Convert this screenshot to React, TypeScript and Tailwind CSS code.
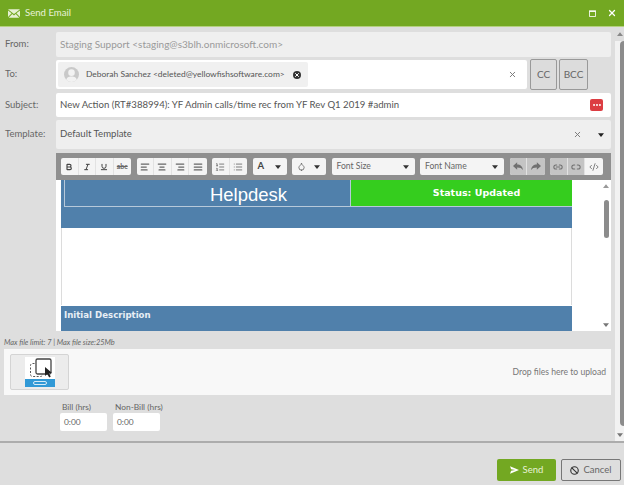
import React from 'react';
import {
  Bold, Italic, Underline, AlignLeft, AlignCenter, AlignRight, AlignJustify, ListOrdered, List,
  Droplet, Link2, Unlink2, CodeXml, X, Ban, Ellipsis,
} from 'lucide-react';

const Caret = ({ className = '' }: { className?: string }) => (
  <svg viewBox="0 0 8 5" className={`w-[6px] h-[4px] ${className}`}>
    <path d="M0 0h8L4 5z" fill="currentColor" />
  </svg>
);

const Label = ({ children }: { children: React.ReactNode }) => (
  <div className="w-[56px] pl-[5px] text-[9.5px] text-[#666] shrink-0">{children}</div>
);

const ToolBtn = ({ children, last, off }: { children: React.ReactNode; last?: boolean; off?: boolean }) => (
  <div className={`w-[17.5px] h-full flex items-center justify-center ${last ? '' : 'border-r border-[#e2e2e2]'} ${off ? 'bg-[#c4c4c4] text-[#707070] border-[#bbb]' : 'text-[#666]'}`}>
    {children}
  </div>
);

const Group = ({ children }: { children: React.ReactNode }) => (
  <div className="flex h-[17px] bg-[#f4f4f4] rounded-[2px] overflow-hidden">{children}</div>
);

const Dropdown = ({ children, w }: { children: React.ReactNode; w: string }) => (
  <div className={`${w} h-[17px] bg-[#f4f4f4] rounded-[2px] flex items-center justify-between pl-[5px] pr-[6px] text-[8.6px] text-[#666]`}>
    <span className="flex items-center">{children}</span>
    <Caret className="text-[#333]" />
  </div>
);

const ic = 'w-[10px] h-[10px]';

export default function App() {
  return (
    <div className="w-[624px] h-[485px] bg-[#dedede] flex flex-col overflow-hidden font-['Lato',sans-serif]">
      <div className="h-[27px] bg-[#73a822] border-b border-[#b4d17f] flex items-center pl-[8px] pr-[7px] text-white shrink-0">
        <svg viewBox="0 0 14 10" className="w-[12px] h-[9px] mr-[5px]">
          <path d="M0 0h14L7 5.5z M0 1.5V9l4.2-4.2z M14 1.5V9L9.8 4.8z M0.8 10h12.4L9 5.6 7 7.2 5 5.6z" fill="#e6f0d4" />
        </svg>
        <span className="text-[9.6px] text-[#e8f2d8]">Send Email</span>
        <svg viewBox="0 0 8 8" className="w-[7px] h-[7px] ml-auto mr-[11px]">
          <path d="M.5 1.5h7v6h-7z" fill="none" stroke="white" strokeWidth="1" />
          <path d="M0 .5h8v1.5H0z" fill="white" />
        </svg>
        <X className="w-[10px] h-[10px]" strokeWidth={3} />
      </div>

      <div className="h-[416px] flex shrink-0 border-b-2 border-[#acacac]">
        <div className="w-[615px] flex flex-col pt-[5px]">
          <div className="flex items-center h-[25px]">
            <Label>From:</Label>
            <div className="w-[555px] h-full bg-[#efefef] rounded-[2px] flex items-center pl-[4px] text-[10px] text-[#9a9a9a]">
              Staging Support &lt;staging@s3blh.onmicrosoft.com&gt;
            </div>
          </div>

          <div className="flex items-center h-[31px] mt-[2px]">
            <Label>To:</Label>
            <div className="w-[471px] h-[29px] bg-white rounded-[2px] flex items-center pl-[2px] pr-[10px]">
              <div className="w-[250px] h-[25px] bg-[#f0f0f0] rounded-[2px] flex items-center pl-[6px] pr-[7px]">
                <div className="w-[15px] h-[15px] rounded-full bg-[#c9c9c9] flex items-center justify-center overflow-hidden shrink-0">
                  <svg viewBox="0 0 16 16" className="w-[15px] h-[15px]">
                    <circle cx="8" cy="6" r="3.5" fill="#f2f2f2" />
                    <path d="M2 16c0-5 3-6 6-6s6 1 6 6z" fill="#f2f2f2" />
                  </svg>
                </div>
                <span className="ml-[7px] text-[8.45px] text-[#555] whitespace-nowrap">Deborah Sanchez &lt;deleted@yellowfishsoftware.com&gt;</span>
                <div className="ml-auto w-[8px] h-[8px] rounded-full bg-[#333] flex items-center justify-center shrink-0">
                  <X className="w-[6px] h-[6px] text-white" strokeWidth={4} />
                </div>
              </div>
              <X className="w-[9px] h-[9px] ml-auto text-[#777]" strokeWidth={2.5} />
            </div>
            <div className="w-[27px] h-[31px] ml-[3px] bg-[#dcdcdc] border border-[#999] rounded-[2px] flex items-center justify-center text-[10px] text-[#666]">CC</div>
            <div className="w-[29px] h-[31px] ml-[2px] bg-[#dcdcdc] border border-[#999] rounded-[2px] flex items-center justify-center text-[10px] text-[#666]">BCC</div>
          </div>

          <div className="flex items-center h-[24px] mt-[3px]">
            <Label>Subject:</Label>
            <div className="w-[555px] h-full bg-white rounded-[2px] flex items-center pl-[4px] pr-[8px] text-[9.6px] text-[#555]">
              New Action (RT#388994): YF Admin calls/time rec from YF Rev Q1 2019 #admin
              <div className="ml-auto w-[13px] h-[12px] bg-[#dc3d42] rounded-[2px] flex items-center justify-center">
                <Ellipsis className="w-[10px] h-[10px] text-white" strokeWidth={3} />
              </div>
            </div>
          </div>

          <div className="flex items-center h-[29px] mt-[3px]">
            <Label>Template:</Label>
            <div className="w-[555px] h-full bg-[#efefef] rounded-[2px] flex items-center pl-[4px] pr-[7px] text-[9.6px] text-[#555]">
              Default Template
              <X className="w-[9px] h-[9px] ml-auto mr-[16px] text-[#777]" strokeWidth={2.5} />
              <Caret className="text-[#222]" />
            </div>
          </div>

          <div className="ml-[56px] w-[555px] mt-[4px] flex flex-col">
            <div className="h-[27px] bg-[#8f8f8f] flex items-center pl-[5px] gap-[5.5px]">
              <Group>
                <ToolBtn><Bold className="w-[8px] h-[8px] text-[#444]" strokeWidth={3.5} /></ToolBtn>
                <ToolBtn><Italic className="w-[8px] h-[8px] text-[#444]" strokeWidth={3} /></ToolBtn>
                <ToolBtn><Underline className="w-[8px] h-[8px] text-[#444]" strokeWidth={3} /></ToolBtn>
                <ToolBtn last><span className="text-[7px] font-bold line-through leading-none">abc</span></ToolBtn>
              </Group>
              <Group>
                <ToolBtn><AlignLeft className={ic} strokeWidth={3} /></ToolBtn>
                <ToolBtn><AlignCenter className={ic} strokeWidth={3} /></ToolBtn>
                <ToolBtn><AlignRight className={ic} strokeWidth={3} /></ToolBtn>
                <ToolBtn last><AlignJustify className={ic} strokeWidth={3} /></ToolBtn>
              </Group>
              <Group>
                <ToolBtn><ListOrdered className={ic} strokeWidth={2} /></ToolBtn>
                <ToolBtn last><List className={ic} strokeWidth={2} /></ToolBtn>
              </Group>
              <Dropdown w="w-[34px]"><span className="font-bold text-[#444] text-[9.5px]">A</span></Dropdown>
              <Dropdown w="w-[34px]"><Droplet className="w-[9px] h-[9px] text-[#555]" /></Dropdown>
              <Dropdown w="w-[83px]">Font Size</Dropdown>
              <Dropdown w="w-[84px]">Font Name</Dropdown>
              <Group>
                <ToolBtn off>
                  <svg viewBox="0 0 12 10" className="w-[10px] h-[9px]">
                    <path d="M0 4.5L5 0v2.6c4 0 6.5 2.2 7 7-1.4-2.6-3.6-3.4-7-3.4V9z" fill="currentColor" />
                  </svg>
                </ToolBtn>
                <ToolBtn last off>
                  <svg viewBox="0 0 12 10" className="w-[10px] h-[9px]">
                    <path d="M12 4.5L7 0v2.6c-4 0-6.5 2.2-7 7 1.4-2.6 3.6-3.4 7-3.4V9z" fill="currentColor" />
                  </svg>
                </ToolBtn>
              </Group>
              <Group>
                <ToolBtn off><Link2 className={ic} strokeWidth={2.5} /></ToolBtn>
                <ToolBtn off><Unlink2 className={ic} strokeWidth={2.5} /></ToolBtn>
                <ToolBtn last><CodeXml className={ic} strokeWidth={2} /></ToolBtn>
              </Group>
            </div>

            <div className="h-[151px] bg-white flex pl-[5px]">
              <div className="w-[511px] flex flex-col">
                <div className="h-[27px] flex bg-[#5080ab] pl-[3px] shrink-0">
                  <div className="w-[287px] border border-t-0 border-[#b7c9da] flex items-center justify-center pl-[82px] pt-[3px] text-[18.5px] text-white font-['Liberation_Sans',sans-serif]">Helpdesk</div>
                  <div className="flex-1 bg-[#35cd1e] border-b border-[#b7c9da] flex items-center justify-center pl-[30px] text-[9.5px] font-bold text-white font-['DejaVu_Sans',sans-serif]">Status: Updated</div>
                </div>
                <div className="h-[21px] bg-[#5080ab] shrink-0" />
                <div className="flex-1 border-x border-[#dcdcdc]" />
                <div className="h-[25px] bg-[#5080ab] mt-[1px] pl-[3px] pt-[3px] text-[8.6px] font-bold text-[#e8eff5] font-['DejaVu_Sans',sans-serif] shrink-0">Initial Description</div>
              </div>
              <div className="flex-1 flex justify-end">
                <div className="w-[9px] flex flex-col items-center py-[4px] pr-[1px]">
                  <Caret className="rotate-180 text-[#999]" />
                  <div className="w-[5px] h-[38px] mt-[12px] bg-[#8c8c8c] rounded-full" />
                  <Caret className="mt-auto text-[#777]" />
                </div>
              </div>
            </div>
          </div>

          <div className="h-[12px] mt-[6px] pl-[4px] text-[7.4px] italic text-[#666] leading-[12px]">Max file limit: 7 | Max file size:25Mb</div>

          <div className="w-[607px] h-[46px] ml-[4px] bg-[#f8f8f8] flex items-center pl-[6px] pr-[5px]">
            <div className="w-[59px] h-[36px] bg-[#ececec] border border-[#d4d4d4] rounded-[2px] flex items-center justify-center">
              <div className="w-[30px] h-[30px] bg-white flex flex-col">
                <svg viewBox="0 0 30 22" className="w-[30px] h-[22px]">
                  <rect x="5.5" y="6.5" width="12" height="13" rx="2" fill="none" stroke="#555" strokeWidth="1" strokeDasharray="2 1.5" />
                  <rect x="11" y="2" width="15" height="15" rx="1.5" fill="#fff" stroke="#444" strokeWidth="1.3" />
                  <path d="M20 10l0 9 2.2-2 2 3.5 1.6-.9-2-3.4 3-.5z" fill="#222" />
                </svg>
                <div className="h-[8px] bg-[#3199d6] flex items-center justify-center">
                  <div className="w-[14px] h-[4px] rounded-full border border-white/80" />
                </div>
              </div>
            </div>
            <span className="ml-auto text-[8.6px] text-[#777]">Drop files here to upload</span>
          </div>

          <div className="flex pl-[60px] gap-[6px] mt-[6px]">
            <div className="flex flex-col">
              <span className="text-[8.4px] text-[#666] pl-[2px] leading-[12px]">Bill (hrs)</span>
              <div className="w-[47px] h-[18px] bg-white rounded-[2px] flex items-center pl-[4px] text-[8.4px] text-[#666]">0:00</div>
            </div>
            <div className="flex flex-col">
              <span className="text-[8.4px] text-[#666] pl-[2px] leading-[12px]">Non-Bill (hrs)</span>
              <div className="w-[47px] h-[18px] bg-white rounded-[2px] flex items-center pl-[4px] text-[8.4px] text-[#666]">0:00</div>
            </div>
          </div>
        </div>

        <div className="w-[9px] flex flex-col items-end bg-[#f2f2f2]">
          <div className="w-full h-[14px] bg-[#dedede] flex justify-end items-center pr-[1px]">
            <Caret className="rotate-180 text-[#888]" />
          </div>
          <div className="w-[4px] h-[385px] bg-[#8c8c8c] rounded-l-full" />
          <Caret className="mt-auto mb-[4px] mr-[1px] text-[#777]" />
        </div>
      </div>

      <div className="flex-1 flex justify-end items-start pt-[16px] pr-[3px] gap-[5px]">
        <div className="w-[59px] h-[22px] bg-[#73a822] rounded-[2px] flex items-center justify-center text-[9.5px] text-[#e8f2d8]">
          <svg viewBox="0 0 12 10" className="w-[9px] h-[8px] mr-[4px]">
            <path d="M0 0l12 5-12 5 1.5-4L7 5 1.5 4z" fill="white" />
          </svg>
          Send
        </div>
        <div className="w-[60px] h-[22px] bg-[#dedede] border border-[#777] rounded-[2px] flex items-center justify-center text-[9.5px] text-[#666]">
          <Ban className="w-[9px] h-[9px] mr-[4px] text-[#333]" strokeWidth={3} />
          Cancel
        </div>
      </div>
    </div>
  );
}
